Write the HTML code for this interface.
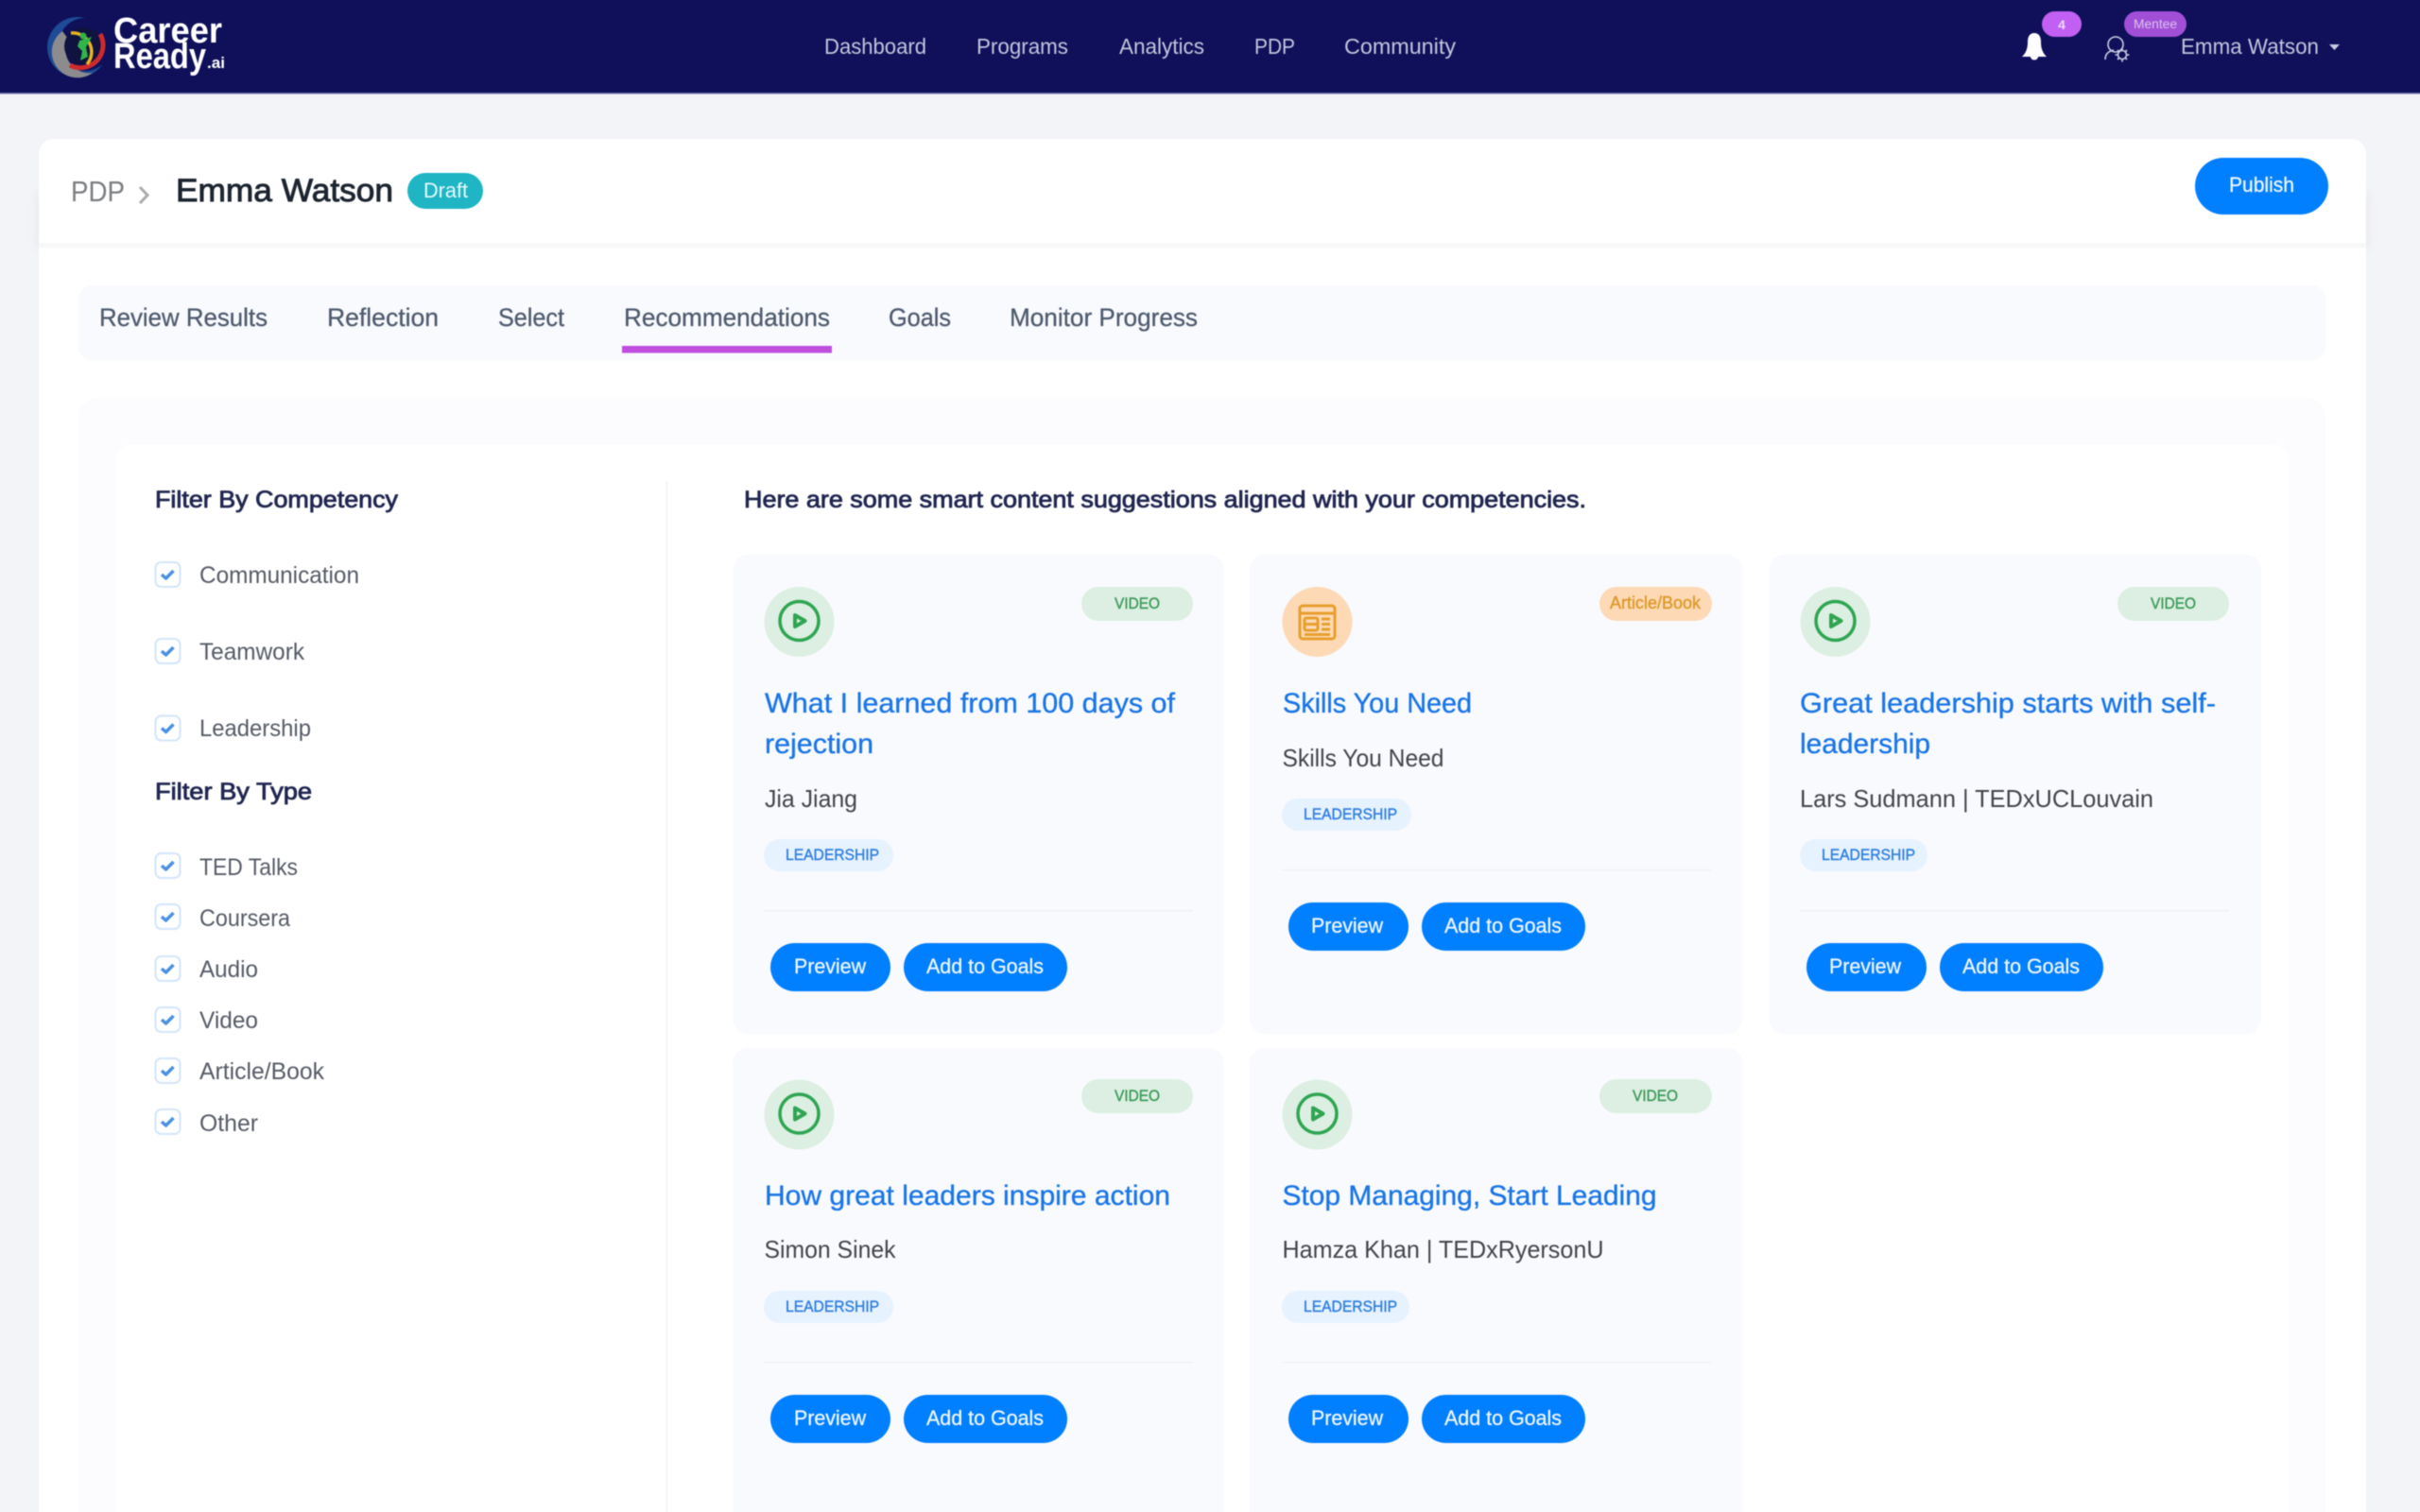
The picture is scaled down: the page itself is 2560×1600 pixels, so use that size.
<!DOCTYPE html>
<html lang="en">
<head>
<meta charset="utf-8">
<title>PDP - Emma Watson</title>
<style>
html,body{margin:0;padding:0;background:#f3f4f8;width:2560px;height:1600px;overflow:hidden}
#page{position:relative;width:2560px;height:1600px;overflow:hidden;contain:paint}
svg{display:block;position:absolute;left:-4px;top:-4px;filter:blur(.4px)}
text{font-family:"Liberation Sans",Arial,sans-serif}
.nav{font-size:23px;fill:#c3c6de}
.tab{font-size:27px;fill:#4f5b6e;stroke:#4f5b6e;stroke-width:.3px}
.filt{font-size:25px;fill:#20264f;stroke:#20264f;stroke-width:.8px}
.opt{font-size:25px;fill:#565b66}
.title{font-size:30px;fill:#1a76e6;stroke:#1a76e6;stroke-width:.35px}
.sub{font-size:26px;fill:#43454c}
.lead{font-size:17px;fill:#2f7fe0;stroke:#2f7fe0;stroke-width:.4px}
.vid{font-size:17px;fill:#3d9a5a;stroke:#3d9a5a;stroke-width:.4px}
.btn{font-size:22px;fill:#eef6ff;stroke:#eef6ff;stroke-width:.3px}
</style>
</head>
<body>
<div id="page">
<svg xmlns="http://www.w3.org/2000/svg" width="2568" height="1608" viewBox="-4 -4 2568 1608">
<defs>
<filter id="sh" x="-2%" y="-50%" width="104%" height="250%"><feDropShadow dx="0" dy="4" stdDeviation="6" flood-color="#000" flood-opacity=".07"/></filter>
<symbol id="play" overflow="visible" viewBox="0 0 75 74" width="75" height="74">
<circle cx="37.500" cy="37" r="37" fill="#dcefe2"/>
<circle cx="37.500" cy="36" r="20.500" fill="none" stroke="#2fa552" stroke-width="3.500"/>
<path d="M33 30 L43.500 36 L33 42Z" fill="none" stroke="#2fa552" stroke-width="4" stroke-linejoin="round"/>
</symbol>
<symbol id="chk" overflow="visible" viewBox="0 0 28 28" width="28" height="28">
<rect x="1" y="1" width="26" height="26" rx="6" fill="#fff" stroke="#d3e5fa" stroke-width="2"/>
<path d="M7.500 14 L12 18 L20 10" fill="none" stroke="#4a90e2" stroke-width="3.500" stroke-linejoin="round"/>
</symbol>
</defs>

<rect x="-4" y="-4" width="2568" height="1608" fill="#f3f4f8"/>

<!-- top navigation -->
<rect x="-4" y="-4" width="2568" height="102" fill="#0f1059"/>
<rect x="-4" y="98" width="2568" height="1.500" fill="#6d70a8"/>

<!-- logo -->
<circle cx="82" cy="50" r="32" fill="#1f4a96"/>
<circle cx="90" cy="47" r="28" fill="#0f1059"/>
<path d="M66 33 A27 27 0 0 0 98 77 A25 25 0 0 1 72 41Z" fill="#8c8c8e"/>
<circle cx="88" cy="49" r="20" fill="#101340"/>
<path d="M106 36 A24 24 0 0 1 74 69" fill="none" stroke="#cf2a2e" stroke-width="5"/>
<path d="M75 35 A20 20 0 0 1 92 68" fill="none" stroke="#e9b420" stroke-width="3.500"/>
<circle cx="88" cy="38" r="3.500" fill="#2fb548"/>
<path d="M84 43 L97 39 L91 50 L93 60 L85 64 L87 54 L82 49Z" fill="#2fb548"/>
<text x="120" y="45" font-size="38" font-weight="bold" fill="#fff" textLength="115" lengthAdjust="spacingAndGlyphs">Career</text>
<text x="120" y="72" font-size="38" font-weight="bold" fill="#fff" textLength="98" lengthAdjust="spacingAndGlyphs">Ready</text>
<text x="219" y="72" font-size="17" font-weight="bold" fill="#fff" textLength="19" lengthAdjust="spacingAndGlyphs">.ai</text>

<text class="nav" x="872" y="57" textLength="108" lengthAdjust="spacingAndGlyphs">Dashboard</text>
<text class="nav" x="1033" y="57" textLength="97" lengthAdjust="spacingAndGlyphs">Programs</text>
<text class="nav" x="1184" y="57" textLength="90" lengthAdjust="spacingAndGlyphs">Analytics</text>
<text class="nav" x="1327" y="57" textLength="43" lengthAdjust="spacingAndGlyphs">PDP</text>
<text class="nav" x="1422" y="57" textLength="118" lengthAdjust="spacingAndGlyphs">Community</text>

<!-- bell -->
<path d="M2152 35 C2147 35 2145 39 2145 44 C2145 52 2143 56 2139 60 L2165 60 C2161 56 2159 52 2159 44 C2159 39 2157 35 2152 35Z" fill="#fff"/>
<path d="M2148 60 A4 3.500 0 0 0 2156 60Z" fill="#fff"/>
<rect x="2160" y="12" width="42" height="27" rx="13.500" fill="#c160f2"/>
<text x="2181" y="31" font-size="14" font-weight="bold" fill="#efd8fb" text-anchor="middle">4</text>

<!-- user gear -->
<g fill="none" stroke="#c9cce2" stroke-width="1.600">
<circle cx="2238" cy="47" r="8"/>
<path d="M2227 63 C2227 57 2231 54 2236 53"/>
<circle cx="2245" cy="58" r="4.500"/>
<path d="M2245 50.500v3M2245 62.500v3M2237.500 58h3M2249.500 58h3M2240 53l2 2M2248 61l2 2M2250 53l-2 2M2242 61l-2 2"/>
</g>
<rect x="2247" y="12" width="66" height="27" rx="13.500" fill="#a24fd8"/>
<text x="2280" y="30" font-size="14" fill="#dcc3ef" text-anchor="middle" textLength="46" lengthAdjust="spacingAndGlyphs">Mentee</text>

<text class="nav" x="2307" y="57" textLength="146" lengthAdjust="spacingAndGlyphs">Emma Watson</text>
<path d="M2464 47 L2475 47 L2469.500 53Z" fill="#c9cce2"/>

<!-- white panel -->
<rect x="41" y="200" width="2462" height="57" fill="#fff" filter="url(#sh)"/>
<path d="M41 257 V163 A16 16 0 0 1 57 147 H2487 A16 16 0 0 1 2503 163 V257Z" fill="#fff"/>
<rect x="41" y="262" width="2462" height="1342" fill="#fff"/>
<rect x="41" y="257" width="2462" height="5" fill="#f7f7f9"/>

<text x="75" y="213" font-size="31" fill="#7b7d80" textLength="57" lengthAdjust="spacingAndGlyphs">PDP</text>
<path d="M148 198 L156 206.500 L148 215" fill="none" stroke="#a9abad" stroke-width="3"/>
<text class="filt" x="186" y="213" style="font-size:34px;fill:#1d2530;stroke:#1d2530;stroke-width:.9px" textLength="230" lengthAdjust="spacingAndGlyphs">Emma Watson</text>
<rect x="431" y="183" width="80" height="38" rx="19" fill="#1fb5c4"/>
<text x="448" y="209" font-size="22" fill="#e8fafb" textLength="47" lengthAdjust="spacingAndGlyphs">Draft</text>

<rect x="2322" y="167" width="141" height="60" rx="30" fill="#007fff"/>
<text class="btn" x="2358" y="203" textLength="69" lengthAdjust="spacingAndGlyphs">Publish</text>

<!-- tabs -->
<rect x="83" y="302" width="2377" height="79" rx="14" fill="#f9fafd"/>
<text class="tab" x="105" y="345" textLength="178" lengthAdjust="spacingAndGlyphs">Review Results</text>
<text class="tab" x="346" y="345" textLength="118" lengthAdjust="spacingAndGlyphs">Reflection</text>
<text class="tab" x="527" y="345" textLength="70" lengthAdjust="spacingAndGlyphs">Select</text>
<text class="tab" x="660" y="345" textLength="218" lengthAdjust="spacingAndGlyphs">Recommendations</text>
<text class="tab" x="940" y="345" textLength="66" lengthAdjust="spacingAndGlyphs">Goals</text>
<text class="tab" x="1068" y="345" textLength="199" lengthAdjust="spacingAndGlyphs">Monitor Progress</text>
<rect x="658" y="366" width="222" height="7.500" fill="#c04fe0"/>

<!-- content wrappers -->
<path d="M83 1604 V441 A20 20 0 0 1 103 421 H2440 A20 20 0 0 1 2460 441 V1604Z" fill="#fcfcfe"/>
<path d="M122 1604 V488 A18 18 0 0 1 140 470 H2403 A18 18 0 0 1 2421 488 V1604Z" fill="#fff"/>
<rect x="704.500" y="509" width="1.500" height="1095" fill="#f1f2f5"/>

<!-- filters -->
<text class="filt" x="164" y="537" textLength="257" lengthAdjust="spacingAndGlyphs">Filter By Competency</text>
<use href="#chk" x="163.500" y="594"/><text class="opt" x="211" y="617" textLength="169" lengthAdjust="spacingAndGlyphs">Communication</text>
<use href="#chk" x="163.500" y="675"/><text class="opt" x="211" y="698" textLength="111" lengthAdjust="spacingAndGlyphs">Teamwork</text>
<use href="#chk" x="163.500" y="756.500"/><text class="opt" x="211" y="779" textLength="118" lengthAdjust="spacingAndGlyphs">Leadership</text>
<text class="filt" x="164" y="846" textLength="166" lengthAdjust="spacingAndGlyphs">Filter By Type</text>
<use href="#chk" x="163.500" y="902"/><text class="opt" x="211" y="926" textLength="104" lengthAdjust="spacingAndGlyphs">TED Talks</text>
<use href="#chk" x="163.500" y="956"/><text class="opt" x="211" y="980" textLength="96" lengthAdjust="spacingAndGlyphs">Coursera</text>
<use href="#chk" x="163.500" y="1011"/><text class="opt" x="211" y="1034" textLength="62" lengthAdjust="spacingAndGlyphs">Audio</text>
<use href="#chk" x="163.500" y="1065"/><text class="opt" x="211" y="1088" textLength="62" lengthAdjust="spacingAndGlyphs">Video</text>
<use href="#chk" x="163.500" y="1119"/><text class="opt" x="211" y="1142" textLength="132" lengthAdjust="spacingAndGlyphs">Article/Book</text>
<use href="#chk" x="163.500" y="1173"/><text class="opt" x="211" y="1197" textLength="62" lengthAdjust="spacingAndGlyphs">Other</text>

<text class="filt" x="787" y="537" textLength="891" lengthAdjust="spacingAndGlyphs">Here are some smart content suggestions aligned with your competencies.</text>

<!-- card 1 -->
<rect x="775" y="587" width="520" height="507" rx="16" fill="#f9fafd"/>
<use href="#play" x="808" y="621"/>
<rect x="1144" y="621" width="118" height="36" rx="18" fill="#dcefe2"/>
<text class="vid" x="1179" y="644" textLength="48" lengthAdjust="spacingAndGlyphs">VIDEO</text>
<text class="title" x="809" y="754" textLength="434" lengthAdjust="spacingAndGlyphs">What I learned from 100 days of</text>
<text class="title" x="809" y="797" textLength="115" lengthAdjust="spacingAndGlyphs">rejection</text>
<text class="sub" x="809" y="854" textLength="98" lengthAdjust="spacingAndGlyphs">Jia Jiang</text>
<rect x="808" y="888" width="137" height="34" rx="17" fill="#e6f2fe"/>
<text class="lead" x="831" y="910" textLength="99" lengthAdjust="spacingAndGlyphs">LEADERSHIP</text>
<rect x="808" y="963" width="454" height="1.500" fill="#f0f1f4"/>
<rect x="815" y="998" width="127" height="51" rx="25.500" fill="#007fff"/>
<text class="btn" x="840" y="1030" textLength="76" lengthAdjust="spacingAndGlyphs">Preview</text>
<rect x="956" y="998" width="173" height="51" rx="25.500" fill="#007fff"/>
<text class="btn" x="980" y="1030" textLength="124" lengthAdjust="spacingAndGlyphs">Add to Goals</text>

<!-- card 2 -->
<rect x="1322" y="587" width="521" height="507" rx="16" fill="#f9fafd"/>
<circle cx="1393.500" cy="658" r="37" fill="#fdd9b5"/>
<g fill="none" stroke="#e7a02e" stroke-width="3">
<rect x="1375" y="641" width="37" height="35" rx="3"/>
<path d="M1375 649h37"/>
<rect x="1380" y="654" width="14" height="13" rx="2"/>
<path d="M1381 660.500h12M1398 655h9M1398 660.500h9M1398 666h9M1380 671.500h27"/>
</g>
<rect x="1692" y="621" width="119" height="36" rx="18" fill="#fdd9b5"/>
<text x="1703" y="644" font-size="18" fill="#dd9a2c" stroke="#dd9a2c" stroke-width=".4" textLength="96" lengthAdjust="spacingAndGlyphs">Article/Book</text>
<text class="title" x="1357" y="754" textLength="200" lengthAdjust="spacingAndGlyphs">Skills You Need</text>
<text class="sub" x="1356.500" y="811" textLength="171" lengthAdjust="spacingAndGlyphs">Skills You Need</text>
<rect x="1356" y="845" width="137" height="34" rx="17" fill="#e6f2fe"/>
<text class="lead" x="1379" y="867" textLength="99" lengthAdjust="spacingAndGlyphs">LEADERSHIP</text>
<rect x="1356" y="920" width="454" height="1.500" fill="#f0f1f4"/>
<rect x="1363" y="955" width="127" height="51" rx="25.500" fill="#007fff"/>
<text class="btn" x="1387" y="987" textLength="76" lengthAdjust="spacingAndGlyphs">Preview</text>
<rect x="1504" y="955" width="173" height="51" rx="25.500" fill="#007fff"/>
<text class="btn" x="1528" y="987" textLength="124" lengthAdjust="spacingAndGlyphs">Add to Goals</text>

<!-- card 3 -->
<rect x="1871" y="587" width="521" height="507" rx="16" fill="#f9fafd"/>
<use href="#play" x="1904" y="621"/>
<rect x="2240" y="621" width="118" height="36" rx="18" fill="#dcefe2"/>
<text class="vid" x="2275" y="644" textLength="48" lengthAdjust="spacingAndGlyphs">VIDEO</text>
<text class="title" x="1904" y="754" textLength="440" lengthAdjust="spacingAndGlyphs">Great leadership starts with self-</text>
<text class="title" x="1904" y="797" textLength="138" lengthAdjust="spacingAndGlyphs">leadership</text>
<text class="sub" x="1904" y="854" textLength="374" lengthAdjust="spacingAndGlyphs">Lars Sudmann | TEDxUCLouvain</text>
<rect x="1904" y="888" width="135" height="34" rx="17" fill="#e6f2fe"/>
<text class="lead" x="1927" y="910" textLength="99" lengthAdjust="spacingAndGlyphs">LEADERSHIP</text>
<rect x="1904" y="963" width="454" height="1.500" fill="#f0f1f4"/>
<rect x="1911" y="998" width="127" height="51" rx="25.500" fill="#007fff"/>
<text class="btn" x="1935" y="1030" textLength="76" lengthAdjust="spacingAndGlyphs">Preview</text>
<rect x="2052" y="998" width="173" height="51" rx="25.500" fill="#007fff"/>
<text class="btn" x="2076" y="1030" textLength="124" lengthAdjust="spacingAndGlyphs">Add to Goals</text>

<!-- card 4 -->
<rect x="775" y="1109" width="520" height="520" rx="16" fill="#f9fafd"/>
<use href="#play" x="808" y="1142.500"/>
<rect x="1144" y="1142" width="118" height="36" rx="18" fill="#dcefe2"/>
<text class="vid" x="1179" y="1165" textLength="48" lengthAdjust="spacingAndGlyphs">VIDEO</text>
<text class="title" x="809" y="1275" textLength="429" lengthAdjust="spacingAndGlyphs">How great leaders inspire action</text>
<text class="sub" x="808.500" y="1331" textLength="139" lengthAdjust="spacingAndGlyphs">Simon Sinek</text>
<rect x="808" y="1366" width="137" height="34" rx="17" fill="#e6f2fe"/>
<text class="lead" x="831" y="1388" textLength="99" lengthAdjust="spacingAndGlyphs">LEADERSHIP</text>
<rect x="808" y="1441" width="454" height="1.500" fill="#f0f1f4"/>
<rect x="815" y="1476" width="127" height="51" rx="25.500" fill="#007fff"/>
<text class="btn" x="840" y="1508" textLength="76" lengthAdjust="spacingAndGlyphs">Preview</text>
<rect x="956" y="1476" width="173" height="51" rx="25.500" fill="#007fff"/>
<text class="btn" x="980" y="1508" textLength="124" lengthAdjust="spacingAndGlyphs">Add to Goals</text>

<!-- card 5 -->
<rect x="1322" y="1109" width="521" height="520" rx="16" fill="#f9fafd"/>
<use href="#play" x="1356" y="1142.500"/>
<rect x="1692" y="1142" width="119" height="36" rx="18" fill="#dcefe2"/>
<text class="vid" x="1727" y="1165" textLength="48" lengthAdjust="spacingAndGlyphs">VIDEO</text>
<text class="title" x="1356.500" y="1275" textLength="396" lengthAdjust="spacingAndGlyphs">Stop Managing, Start Leading</text>
<text class="sub" x="1356.500" y="1331" textLength="340" lengthAdjust="spacingAndGlyphs">Hamza Khan | TEDxRyersonU</text>
<rect x="1356" y="1366" width="135" height="34" rx="17" fill="#e6f2fe"/>
<text class="lead" x="1379" y="1388" textLength="99" lengthAdjust="spacingAndGlyphs">LEADERSHIP</text>
<rect x="1356" y="1441" width="454" height="1.500" fill="#f0f1f4"/>
<rect x="1363" y="1476" width="127" height="51" rx="25.500" fill="#007fff"/>
<text class="btn" x="1387" y="1508" textLength="76" lengthAdjust="spacingAndGlyphs">Preview</text>
<rect x="1504" y="1476" width="173" height="51" rx="25.500" fill="#007fff"/>
<text class="btn" x="1528" y="1508" textLength="124" lengthAdjust="spacingAndGlyphs">Add to Goals</text>
</svg>
</div>
</body>
</html>
